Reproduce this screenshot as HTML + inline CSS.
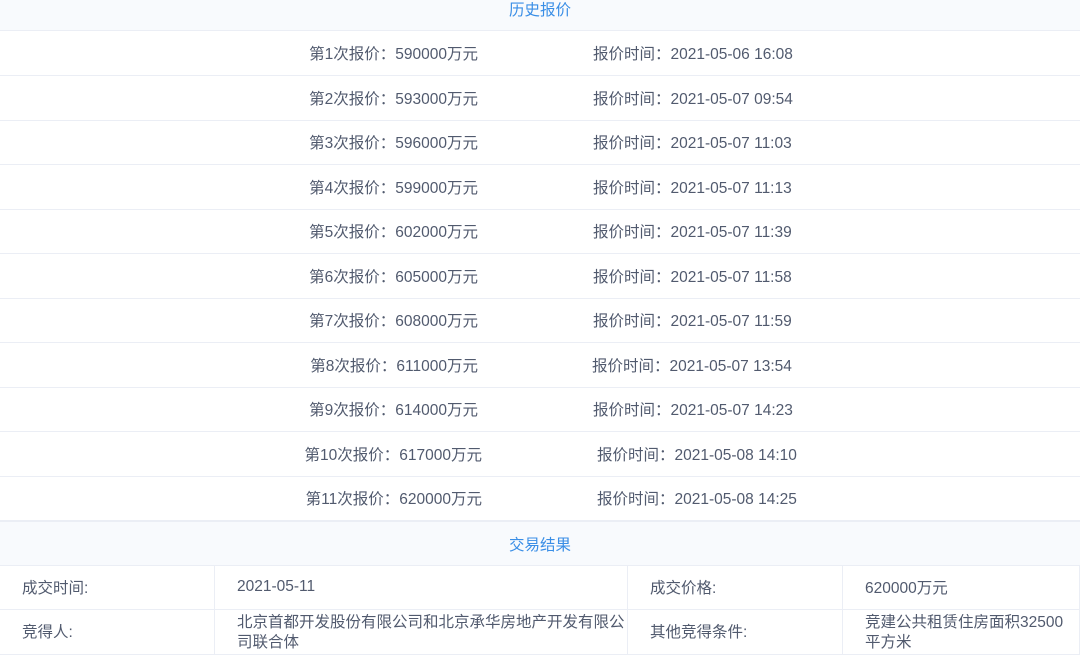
<!DOCTYPE html>
<html><head><meta charset="utf-8"><style>
*{margin:0;padding:0;box-sizing:border-box}
body{width:1080px;height:671px;background:#fff;font-family:"Liberation Sans","Noto Sans CJK SC",sans-serif;color:#515a6e;font-size:15.5px;position:relative;overflow:hidden}
.hd{position:absolute;left:0;width:1080px;background:#f8fafd;color:#3a8ee6;text-align:center;border-bottom:1px solid #ebeef5}
.row{position:absolute;left:0;width:1080px;height:45px;border-bottom:1px solid #ebeef5}
.row span{position:absolute;top:2px;line-height:44px;white-space:nowrap}
.l{right:602px}
.r{left:593px}
.g{position:absolute;border-right:1px solid #ebeef5;border-bottom:1px solid #ebeef5;padding-left:22px}
</style></head><body>
<div class="hd" style="top:0;height:31px;line-height:22px">历史报价</div>
<div class="row" style="top:31px"><span class="l">第1次报价：590000万元</span><span class="r">报价时间：2021-05-06 16:08</span></div>
<div class="row" style="top:76px"><span class="l">第2次报价：593000万元</span><span class="r">报价时间：2021-05-07 09:54</span></div>
<div class="row" style="top:120px"><span class="l">第3次报价：596000万元</span><span class="r">报价时间：2021-05-07 11:03</span></div>
<div class="row" style="top:165px"><span class="l">第4次报价：599000万元</span><span class="r">报价时间：2021-05-07 11:13</span></div>
<div class="row" style="top:209px"><span class="l">第5次报价：602000万元</span><span class="r">报价时间：2021-05-07 11:39</span></div>
<div class="row" style="top:254px"><span class="l">第6次报价：605000万元</span><span class="r">报价时间：2021-05-07 11:58</span></div>
<div class="row" style="top:298px"><span class="l">第7次报价：608000万元</span><span class="r">报价时间：2021-05-07 11:59</span></div>
<div class="row" style="top:343px"><span class="l">第8次报价：611000万元</span><span class="r" style="left:592px">报价时间：2021-05-07 13:54</span></div>
<div class="row" style="top:387px"><span class="l">第9次报价：614000万元</span><span class="r">报价时间：2021-05-07 14:23</span></div>
<div class="row" style="top:432px"><span class="l" style="right:598px">第10次报价：617000万元</span><span class="r" style="left:597px">报价时间：2021-05-08 14:10</span></div>
<div class="row" style="top:476px"><span class="l" style="right:598px">第11次报价：620000万元</span><span class="r" style="left:597px">报价时间：2021-05-08 14:25</span></div>
<div class="hd" style="top:521px;height:45px;line-height:48px;border-top:1px solid #ebeef5">交易结果</div>
<div class="g" style="left:0;top:566px;width:215px;height:44px;line-height:46px">成交时间:</div>
<div class="g" style="left:215px;top:566px;width:413px;height:44px;line-height:42px">2021-05-11</div>
<div class="g" style="left:628px;top:566px;width:215px;height:44px;line-height:46px">成交价格:</div>
<div class="g" style="left:843px;top:566px;width:237px;height:44px;line-height:46px">620000万元</div>
<div class="g" style="left:0;top:610px;width:215px;height:45px;line-height:46px">竞得人:</div>
<div class="g" style="left:215px;top:610px;width:413px;height:45px;line-height:20px;padding-top:3px;padding-left:22px;padding-right:0">北京首都开发股份有限公司和北京承华房地产开发有限公司联合体</div>
<div class="g" style="left:628px;top:610px;width:215px;height:45px;line-height:46px">其他竞得条件:</div>
<div class="g" style="left:843px;top:610px;width:237px;height:45px;line-height:20px;padding-top:3px;padding-left:22px;padding-right:12px">竞建公共租赁住房面积32500平方米</div>
</body></html>
